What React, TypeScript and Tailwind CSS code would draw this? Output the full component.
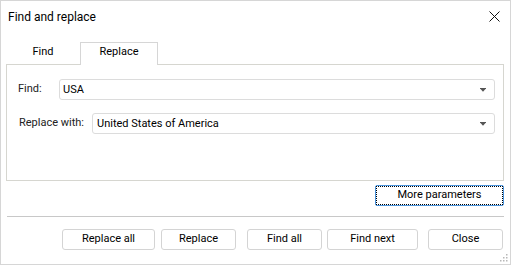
import React from "react";

const Arrow = () => (
  <svg width="6" height="4" viewBox="0 0 6 4" className="shrink-0">
    <rect x="0" y="0" width="6" height="1" fill="#555" />
    <path d="M0.5 1 L5.5 1 L3 3.8 Z" fill="#555" />
  </svg>
);

const Combo = ({ value, className }: { value: string; className: string }) => (
  <div
    className={`h-[21px] flex items-center justify-between border border-[#dcdcdc] rounded-[3px] bg-white pr-[8px] ${className}`}
  >
    <span className="text-[11px] text-black leading-none">{value}</span>
    <Arrow />
  </div>
);

const Btn = ({ label, className }: { label: string; className: string }) => (
  <div
    className={`h-[21px] flex items-center justify-center border border-[#d4d4d4] rounded-[3px] bg-white text-[11px] text-black ${className}`}
  >
    {label}
  </div>
);

export default function App() {
  return (
    <div
      className="relative w-[511px] h-[265px] border border-[#d6d6d6] bg-white flex flex-col overflow-hidden"
      style={{ fontFamily: "Roboto, 'Noto Sans', sans-serif" }}
    >
      {/* title bar */}
      <div className="h-[31px] flex items-center pl-[7px] pr-[10px]">
        <span className="text-[12px] text-black">Find and replace</span>
        <svg width="11" height="11" viewBox="0 0 11 11" className="ml-auto">
          <path d="M0.5 0.5 L10.5 10.5 M10.5 0.5 L0.5 10.5" stroke="#111" strokeWidth="1" />
        </svg>
      </div>

      {/* tabs */}
      <div className="mt-[10px] h-[22px] flex ml-[5px] relative z-10">
        <div className="w-[74px] h-[22px] flex items-center justify-center pb-[2px] text-[11px] text-black">
          Find
        </div>
        <div className="w-[78px] h-[23px] flex items-center justify-center pb-[3px] bg-white border-t border-l border-r border-[#d6d6d6] text-[11px] text-black">
          Replace
        </div>
      </div>

      {/* panel */}
      <div className="ml-[5px] w-[498px] h-[117px] border border-[#d6d6d0] pt-[14px]">
        <div className="flex items-center pl-[11px] pr-[8px]">
          <span className="w-[41px] text-[11px] text-[#222]">Find:</span>
          <Combo value="USA" className="flex-1 pl-[3px]" />
        </div>
        <div className="flex items-center pl-[12px] pr-[8px] mt-[13px]">
          <span className="w-[73px] text-[11px] text-[#222]">Replace with:</span>
          <Combo value="United States of America" className="flex-1 pl-[4px]" />
        </div>
      </div>

      {/* more parameters */}
      <div className="mt-[4px] flex justify-end mr-[6px]">
        <div className="relative w-[129px] h-[21px] border border-[#4a94dd] rounded-[2px] bg-white flex items-center justify-center text-[11px] text-black">
          <div className="absolute inset-0 border border-dotted border-black" />
          More parameters
        </div>
      </div>

      {/* separator */}
      <div className="mt-[10px] mx-[6px] h-px bg-[#c8c8c8]" />

      {/* bottom buttons */}
      <div className="mt-[12px] flex">
        <Btn label="Replace all" className="ml-[61px] w-[93px]" />
        <Btn label="Replace" className="ml-[6px] w-[75px]" />
        <Btn label="Find all" className="ml-[11px] w-[75px]" />
        <Btn label="Find next" className="ml-[5px] w-[91px]" />
        <Btn label="Close" className="ml-[10px] w-[75px]" />
      </div>

      {/* resize grip */}
      <svg width="9" height="9" viewBox="0 0 9 9" className="absolute right-[2px] bottom-[2px]">
        <rect x="7" y="1" width="1.5" height="1.5" fill="#b8b8b8" />
        <rect x="4" y="4" width="1.5" height="1.5" fill="#b8b8b8" />
        <rect x="7" y="4" width="1.5" height="1.5" fill="#b8b8b8" />
        <rect x="1" y="7" width="1.5" height="1.5" fill="#b8b8b8" />
        <rect x="4" y="7" width="1.5" height="1.5" fill="#b8b8b8" />
        <rect x="7" y="7" width="1.5" height="1.5" fill="#b8b8b8" />
      </svg>
    </div>
  );
}
